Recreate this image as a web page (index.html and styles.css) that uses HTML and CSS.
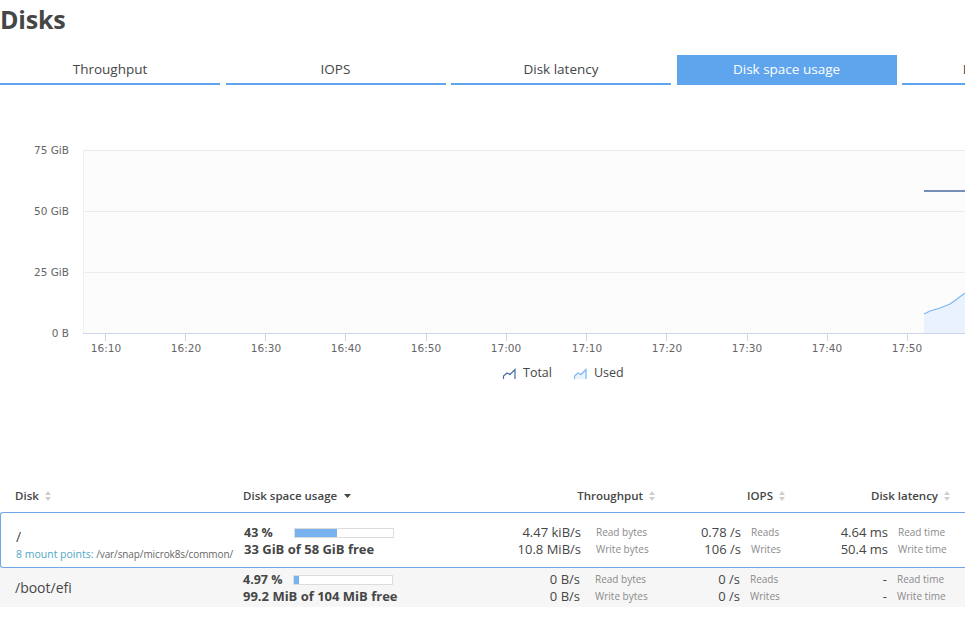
FILE: index.html
```html
<!DOCTYPE html>
<html>
<head>
<meta charset="utf-8">
<link rel="stylesheet" href="styles.css">
</head>
<body>
<div class="page">
  <h1 class="title">Disks</h1>
  <div class="tabs">
    <div class="tab">Throughput</div>
    <div class="tab">IOPS</div>
    <div class="tab">Disk latency</div>
    <div class="tab active">Disk space usage</div>
    <div class="tab">Disk operations</div>
  </div>

  <div class="chart">
    <svg width="965" height="300" viewBox="0 0 965 300" class="chart-svg">
      <rect x="83" y="50" width="900" height="183" fill="#fcfcfc"/>
      <line x1="83" y1="50.5" x2="965" y2="50.5" stroke="#ececec"/>
      <line x1="83" y1="111.5" x2="965" y2="111.5" stroke="#ececec"/>
      <line x1="83" y1="172.5" x2="965" y2="172.5" stroke="#ececec"/>
      <line x1="83.5" y1="50" x2="83.5" y2="233" stroke="#f0f0f0"/>
      <g class="ylab" text-anchor="end">
        <text x="69" y="54">75 GiB</text>
        <text x="69" y="115">50 GiB</text>
        <text x="69" y="176">25 GiB</text>
        <text x="69" y="237">0 B</text>
      </g>
      <path d="M924,214 L930,211 L940,208 L950,204 L957,199 L965,193 L965,233 L924,233 Z" fill="#eaf3fd"/>
      <path d="M924,214 L930,211 L940,208 L950,204 L957,199 L965,193" fill="none" stroke="#7db6ef" stroke-width="1.2"/>
      <line x1="924" y1="91" x2="965" y2="91" stroke="#4a6a9f" stroke-width="1.4"/>
      <line x1="83" y1="233.5" x2="965" y2="233.5" stroke="#ccd6eb"/>
      <g stroke="#ccd6eb">
        <line x1="105.5" y1="233" x2="105.5" y2="241"/>
        <line x1="185.5" y1="233" x2="185.5" y2="241"/>
        <line x1="265.5" y1="233" x2="265.5" y2="241"/>
        <line x1="345.5" y1="233" x2="345.5" y2="241"/>
        <line x1="426.5" y1="233" x2="426.5" y2="241"/>
        <line x1="506.5" y1="233" x2="506.5" y2="241"/>
        <line x1="586.5" y1="233" x2="586.5" y2="241"/>
        <line x1="666.5" y1="233" x2="666.5" y2="241"/>
        <line x1="747.5" y1="233" x2="747.5" y2="241"/>
        <line x1="827.5" y1="233" x2="827.5" y2="241"/>
        <line x1="907.5" y1="233" x2="907.5" y2="241"/>
      </g>
      <g class="xlab" text-anchor="middle">
        <text x="106" y="252">16:10</text>
        <text x="186" y="252">16:20</text>
        <text x="266" y="252">16:30</text>
        <text x="346" y="252">16:40</text>
        <text x="426" y="252">16:50</text>
        <text x="506" y="252">17:00</text>
        <text x="587" y="252">17:10</text>
        <text x="667" y="252">17:20</text>
        <text x="747" y="252">17:30</text>
        <text x="827" y="252">17:40</text>
        <text x="907" y="252">17:50</text>
      </g>
      <path d="M503.5,279 L503.5,276 L507,273 L510,274.5 L515,269.5 L515,279" fill="none" stroke="#4a6a9f" stroke-width="1.2"/>
      <text class="legend" x="523" y="277">Total</text>
      <path d="M574.5,279 L574.5,276 L578,273 L581,274.5 L586,269.5 L586,279 Z" fill="#eaf3fd" stroke="none"/>
      <path d="M574.5,279 L574.5,276 L578,273 L581,274.5 L586,269.5 L586,279" fill="none" stroke="#7db6ef" stroke-width="1.2"/>
      <text class="legend" x="594" y="277">Used</text>
    </svg>
  </div>

  <div class="table">
    <div class="thead">
      <div class="th th-disk">Disk <svg class="sort" width="6" height="10" viewBox="0 0 6 10"><path d="M3,0 L6,4 L0,4 Z M3,10 L6,6 L0,6 Z" fill="#cfcfcf"/></svg></div>
      <div class="th th-space">Disk space usage <svg class="sortdown" width="7" height="4" viewBox="0 0 7 4"><path d="M0,0 L7,0 L3.5,4 Z" fill="#454646"/></svg></div>
      <div class="th th-num">Throughput <svg class="sort" width="6" height="10" viewBox="0 0 6 10"><path d="M3,0 L6,4 L0,4 Z M3,10 L6,6 L0,6 Z" fill="#cfcfcf"/></svg></div>
      <div class="th th-num">IOPS <svg class="sort" width="6" height="10" viewBox="0 0 6 10"><path d="M3,0 L6,4 L0,4 Z M3,10 L6,6 L0,6 Z" fill="#cfcfcf"/></svg></div>
      <div class="th th-num th-last">Disk latency <svg class="sort" width="6" height="10" viewBox="0 0 6 10"><path d="M3,0 L6,4 L0,4 Z M3,10 L6,6 L0,6 Z" fill="#cfcfcf"/></svg></div>
    </div>

    <div class="row selected">
      <div class="cell disk disk-first">
        <div class="disk-name">/</div>
        <div class="mount"><span class="mount-count">8 mount points:</span> <span class="mount-path">/var/snap/microk8s/common/</span></div>
      </div>
      <div class="cell space">
        <div class="pct-line"><span class="pct">43 %</span><span class="bar"><span class="fill" style="width:43%"></span></span></div>
        <div class="free">33 GiB of 58 GiB free</div>
      </div>
      <div class="cell metric tp">
        <span class="val">4.47 kiB/s</span><span class="lbl">Read bytes</span>
        <span class="val">10.8 MiB/s</span><span class="lbl">Write bytes</span>
      </div>
      <div class="cell metric iops">
        <span class="val">0.78 /s</span><span class="lbl">Reads</span>
        <span class="val">106 /s</span><span class="lbl">Writes</span>
      </div>
      <div class="cell metric lat">
        <span class="val">4.64 ms</span><span class="lbl">Read time</span>
        <span class="val">50.4 ms</span><span class="lbl">Write time</span>
      </div>
    </div>

    <div class="row alt">
      <div class="cell disk disk-center">
        <div class="disk-name">/boot/efi</div>
      </div>
      <div class="cell space">
        <div class="pct-line"><span class="pct">4.97 %</span><span class="bar"><span class="fill" style="width:5%"></span></span></div>
        <div class="free">99.2 MiB of 104 MiB free</div>
      </div>
      <div class="cell metric tp">
        <span class="val">0 B/s</span><span class="lbl">Read bytes</span>
        <span class="val">0 B/s</span><span class="lbl">Write bytes</span>
      </div>
      <div class="cell metric iops">
        <span class="val">0 /s</span><span class="lbl">Reads</span>
        <span class="val">0 /s</span><span class="lbl">Writes</span>
      </div>
      <div class="cell metric lat">
        <span class="val">-</span><span class="lbl">Read time</span>
        <span class="val">-</span><span class="lbl">Write time</span>
      </div>
    </div>
  </div>
</div>
</body>
</html>
```

FILE: styles.css
```css
html, body {
  margin: 0;
  padding: 0;
  background: #ffffff;
  overflow: hidden;
}

body {
  font-family: "Open Sans", "Lato", sans-serif;
  color: #454646;
  width: 965px;
  height: 618px;
}

.page {
  width: 1000px;
}

.title {
  margin: 0;
  padding-top: 2px;
  font-size: 25px;
  line-height: 34px;
  font-weight: 700;
  color: #454646;
  letter-spacing: -0.2px;
}

.tabs {
  display: flex;
  gap: 5.5px;
  margin-top: 19px;
}

.tab {
  flex: 0 0 220px;
  height: 28px;
  line-height: 28px;
  text-align: center;
  font-size: 13.5px;
  color: #454646;
  border-bottom: 2px solid #5ea5ee;
  box-sizing: content-box;
  white-space: nowrap;
}

.tab.active {
  background: #5ea5ee;
  color: #ffffff;
}

.chart {
  margin-top: 15px;
  height: 300px;
}

.chart-svg {
  display: block;
  font-family: "DejaVu Sans", "Liberation Sans", sans-serif;
}

.ylab text, .xlab text {
  font-size: 10.5px;
  fill: #666666;
}

.legend {
  font-family: "Open Sans", sans-serif;
  font-size: 12.5px;
  fill: #454646;
}

.table {
  margin-top: 83px;
  width: 990px;
  font-size: 13px;
}

.thead, .row {
  display: grid;
  grid-template-columns: 243px 200px 212px 130px 175px;
}

.thead {
  height: 25px;
  padding-bottom: 4px;
  align-items: center;
  font-size: 11.5px;
  font-weight: 600;
  color: #454646;
}

.th-disk {
  padding-left: 15px;
}

.th-num {
  text-align: right;
}

.th-last {
  padding-right: 10px;
}

.sort {
  margin-left: 3px;
  vertical-align: -1px;
}

.sortdown {
  margin-left: 4px;
  vertical-align: 2px;
}

.row.selected {
  border: 1px solid #6fa8e8;
  border-right: none;
  border-radius: 3px 0 0 3px;
  padding: 11px 0 0;
}

.row.alt {
  background: #f6f6f6;
  padding: 3px 0 2px;
}

.cell.disk {
  padding-left: 15px;
  overflow: hidden;
  white-space: nowrap;
  padding-right: 10px;
}

.disk-first {
  padding-top: 4px;
  padding-bottom: 5px;
}

.disk-center {
  align-self: center;
}

.disk-name {
  font-size: 14px;
  line-height: 18px;
}

.mount {
  font-size: 10.5px;
  line-height: 16px;
  color: #666666;
  overflow: hidden;
}

.mount-count {
  color: #4fa7c4;
}

.mount-path {
  font-size: 10px;
  letter-spacing: -0.1px;
}

.space {
  line-height: 17px;
}

.pct-line {
  display: flex;
  align-items: center;
}

.pct {
  font-weight: 700;
  font-size: 12.5px;
  width: 50px;
}

.bar {
  display: block;
  width: 98px;
  height: 8px;
  border: 1px solid #dcdcdc;
  background: #ffffff;
}

.fill {
  display: block;
  height: 100%;
  background: #78b3ef;
}

.free {
  font-weight: 700;
  font-size: 13px;
}

.metric {
  display: grid;
  line-height: 17px;
  column-gap: 10px;
  align-content: start;
}

.metric.tp {
  grid-template-columns: 1fr 60px;
  column-gap: 15px;
}

.metric.iops {
  grid-template-columns: 1fr 35px;
}

.metric.lat {
  grid-template-columns: 1fr 63px;
}

.val {
  text-align: right;
  font-size: 13px;
  color: #454646;
  white-space: nowrap;
}

.lbl {
  font-size: 10px;
  color: #8a8a8a;
  white-space: nowrap;
}
```
